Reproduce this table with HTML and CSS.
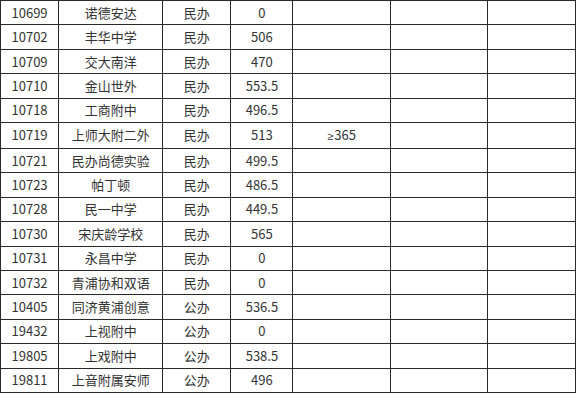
FILE: index.html
```html
<!DOCTYPE html>
<html lang="zh">
<head>
<meta charset="utf-8">
<link rel="stylesheet" href="styles.css">
</head>
<body>
<table class="grid">
<colgroup>
<col class="c1"><col class="c2"><col class="c3"><col class="c4"><col class="c5"><col class="c6"><col class="c7">
</colgroup>
<tbody>
<tr><td>10699</td><td>诺德安达</td><td>民办</td><td>0</td><td></td><td></td><td></td></tr>
<tr><td>10702</td><td>丰华中学</td><td>民办</td><td>506</td><td></td><td></td><td></td></tr>
<tr><td>10709</td><td>交大南洋</td><td>民办</td><td>470</td><td></td><td></td><td></td></tr>
<tr><td>10710</td><td>金山世外</td><td>民办</td><td>553.5</td><td></td><td></td><td></td></tr>
<tr><td>10718</td><td>工商附中</td><td>民办</td><td>496.5</td><td></td><td></td><td></td></tr>
<tr><td>10719</td><td>上师大附二外</td><td>民办</td><td>513</td><td><span class="sym">≥</span>365</td><td></td><td></td></tr>
<tr><td>10721</td><td>民办尚德实验</td><td>民办</td><td>499.5</td><td></td><td></td><td></td></tr>
<tr><td>10723</td><td>帕丁顿</td><td>民办</td><td>486.5</td><td></td><td></td><td></td></tr>
<tr><td>10728</td><td>民一中学</td><td>民办</td><td>449.5</td><td></td><td></td><td></td></tr>
<tr><td>10730</td><td>宋庆龄学校</td><td>民办</td><td>565</td><td></td><td></td><td></td></tr>
<tr><td>10731</td><td>永昌中学</td><td>民办</td><td>0</td><td></td><td></td><td></td></tr>
<tr><td>10732</td><td>青浦协和双语</td><td>民办</td><td>0</td><td></td><td></td><td></td></tr>
<tr><td>10405</td><td>同济黄浦创意</td><td>公办</td><td>536.5</td><td></td><td></td><td></td></tr>
<tr><td>19432</td><td>上视附中</td><td>公办</td><td>0</td><td></td><td></td><td></td></tr>
<tr><td>19805</td><td>上戏附中</td><td>公办</td><td>538.5</td><td></td><td></td><td></td></tr>
<tr><td>19811</td><td>上音附属安师</td><td>公办</td><td>496</td><td></td><td></td><td></td></tr>
</tbody>
</table>
</body>
</html>
```

FILE: styles.css
```css
html, body {
  margin: 0;
  padding: 0;
  background: #ffffff;
}
.grid {
  border-collapse: collapse;
  table-layout: fixed;
  width: 576px;
  height: 393px;
  font-family: "Noto Sans CJK SC", "Noto Sans", sans-serif;
  font-size: 13px;
  color: #333333;
}
.grid td {
  border: 1px solid #2a2a2a;
  padding: 0;
  text-align: center;
  vertical-align: middle;
  line-height: 16px;
  white-space: nowrap;
  overflow: hidden;
}
.sym {
  font-family: "Liberation Sans", sans-serif;
  font-size: 11px;
  margin-right: 1px;
}
.c1 { width: 58px; }
.c2 { width: 104px; }
.c3 { width: 68px; }
.c4 { width: 62px; }
.c5 { width: 97px; }
.c6 { width: 97px; }
.c7 { width: 88px; }
```
